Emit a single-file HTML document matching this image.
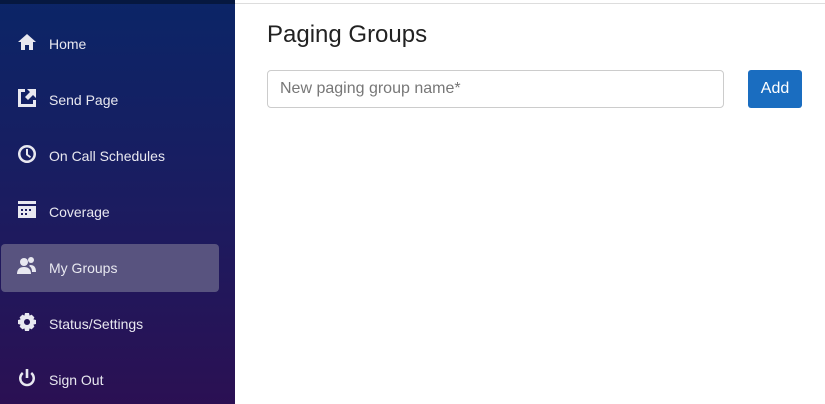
<!DOCTYPE html>
<html><head><style>
body{margin:0;width:825px;height:404px;overflow:hidden;font-family:"Liberation Sans",sans-serif;background:#fff;position:relative}
.sb{position:absolute;left:0;top:0;width:235px;height:404px;background:linear-gradient(#0b2567,#1b1c60 50%,#2b1053)}
.sb:before{content:"";position:absolute;left:0;top:0;width:235px;height:4px;background:#061840}
.it{position:absolute;left:1px;width:218px;height:48px;color:#e8e8f0;font-size:14px;line-height:48px}
.it span{position:absolute;left:48px}
.it svg{position:absolute;left:16px;top:12px;width:20px;height:20px;fill:#e8e8f0}
.act{background:#58537f;border-radius:4px}
.top{position:absolute;left:235px;top:3px;right:0;height:1px;background:#ddd}
h1{position:absolute;left:267px;top:21px;margin:0;font-weight:400;font-size:24px;color:#222}
.in{position:absolute;left:267px;top:70px;width:455px;height:36px;border:1px solid #ccc;border-radius:4px;font-size:16px;color:#777;line-height:36px;box-sizing:content-box}
.in span{margin-left:12px}
.btn{position:absolute;left:748px;top:70px;width:54px;height:38px;background:#1a6dc0;border-radius:3px;color:#fff;font-size:16px;line-height:38px;text-align:center}
</style></head><body>
<div class="sb">
<div class="it" style="top:20px"><svg viewBox="0 0 20 20"><path d="M10 2L1 10h3v8h4v-5h4v5h4v-8h3z"/></svg><span>Home</span></div>
<div class="it" style="top:76px"><svg viewBox="0 0 20 20"><path d="M1 1h7v3H4v12h12v-4h3v7H1z M10 1h9v9l-3-3-5 5-3-3 5-5z"/></svg><span>Send Page</span></div>
<div class="it" style="top:132px"><svg viewBox="0 0 20 20"><path d="M10 1a9 9 0 1 0 .01 0zm0 2.5a6.5 6.5 0 1 1-.01 0zM9 5v6l4 3 1-1.5-3-2.3V5z"/></svg><span>On Call Schedules</span></div>
<div class="it" style="top:188px"><svg viewBox="0 0 20 20"><path d="M1 1h18v3H1zM1 6h18v12H1zM4 9v2h2V9zm4 0v2h2V9zm4 0v2h2V9zM4 13v2h2v-2zm4 0v2h2v-2z"/></svg><span>Coverage</span></div>
<div class="it act" style="top:244px"><svg viewBox="0 0 20 20"><circle cx="7" cy="6" r="4"/><path d="M0 18c0-5 3-7 7-7s7 2 7 7z"/><circle cx="14" cy="4" r="3"/><path d="M13 9c4 0 6 2 6 7h-4c0-3-1-5-3-6z"/></svg><span>My Groups</span></div>
<div class="it" style="top:300px"><svg viewBox="0 0 20 20"><path d="M8 1h4l.6 2.6 2-1 2.8 2.8-1 2L19 8v4l-2.6.6 1 2-2.8 2.8-2-1L12 19H8l-.6-2.6-2 1-2.8-2.8 1-2L1 12V8l2.6-.6-1-2 2.8-2.8 2 1zM10 7a3 3 0 1 0 .01 0z"/></svg><span>Status/Settings</span></div>
<div class="it" style="top:356px"><svg viewBox="0 0 20 20"><path d="M8.7 1h2.6v9H8.7zM5 4l1.6 2A5.5 5.5 0 1 0 13.4 6L15 4a8 8 0 1 1-10 0z"/></svg><span>Sign Out</span></div>
</div>
<div class="top"></div>
<h1>Paging Groups</h1>
<div class="in"><span>New paging group name*</span></div>
<div class="btn">Add</div>
</body></html>
